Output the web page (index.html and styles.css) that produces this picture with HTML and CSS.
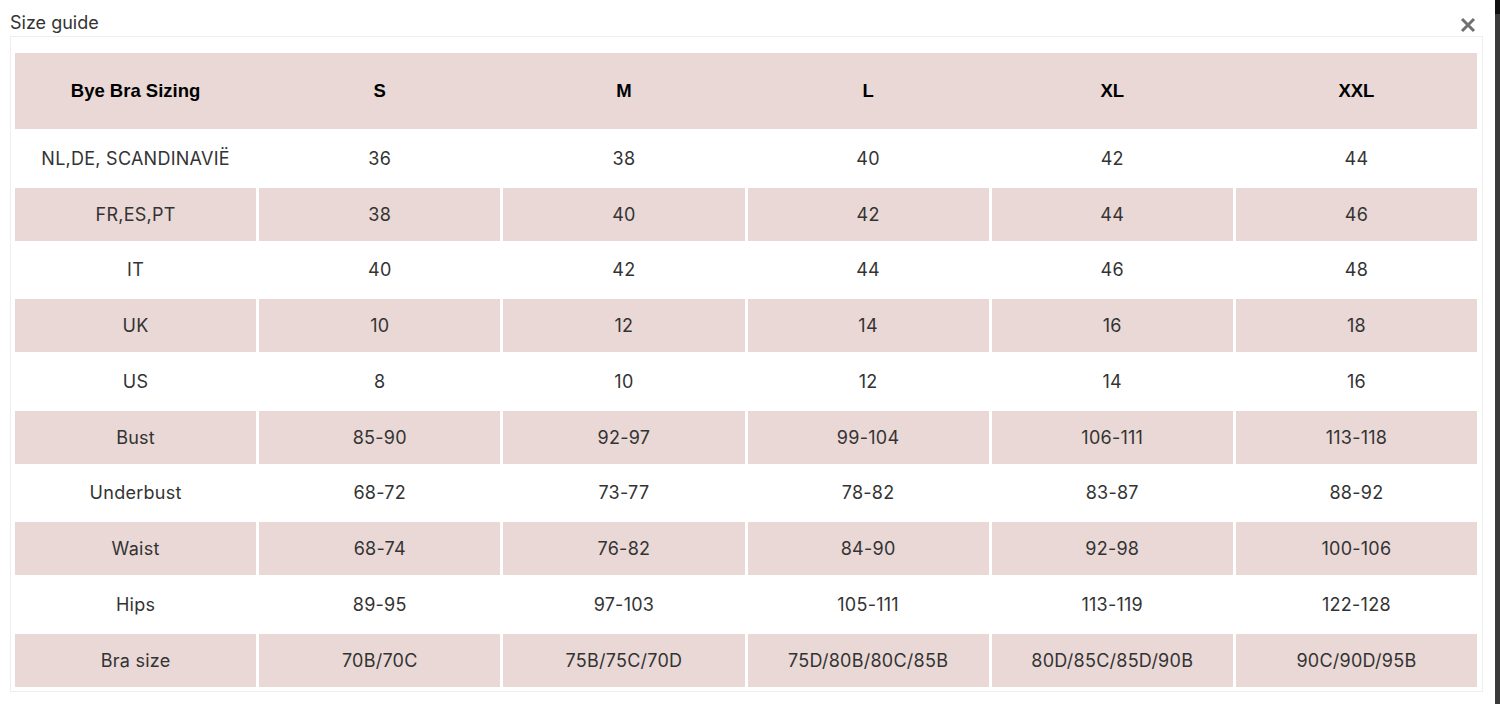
FILE: index.html
```html
<!DOCTYPE html>
<html lang="nl">
<head>
<meta charset="utf-8">
<title>Size guide</title>
<link rel="stylesheet" href="styles.css">
</head>
<body>
<div class="window">
  <main class="page">
    <header class="titlebar">
      <h1 class="title">Size guide</h1>
      <button class="close" aria-label="Close">
        <svg width="16" height="16" viewBox="0 0 16 16"><path d="M2 2 L14 14 M14 2 L2 14" stroke="#707070" stroke-width="3" stroke-linecap="butt"/></svg>
      </button>
    </header>
    <section class="box">
      <div class="table">
        <div class="row head">
          <div class="cell">Bye Bra Sizing</div><div class="cell">S</div><div class="cell">M</div><div class="cell">L</div><div class="cell">XL</div><div class="cell">XXL</div>
        </div>
        <div class="row plain">
          <div class="cell">NL,DE, SCANDINAVIË</div><div class="cell">36</div><div class="cell">38</div><div class="cell">40</div><div class="cell">42</div><div class="cell">44</div>
        </div>
        <div class="row pink">
          <div class="cell">FR,ES,PT</div><div class="cell">38</div><div class="cell">40</div><div class="cell">42</div><div class="cell">44</div><div class="cell">46</div>
        </div>
        <div class="row plain">
          <div class="cell">IT</div><div class="cell">40</div><div class="cell">42</div><div class="cell">44</div><div class="cell">46</div><div class="cell">48</div>
        </div>
        <div class="row pink">
          <div class="cell">UK</div><div class="cell">10</div><div class="cell">12</div><div class="cell">14</div><div class="cell">16</div><div class="cell">18</div>
        </div>
        <div class="row plain">
          <div class="cell">US</div><div class="cell">8</div><div class="cell">10</div><div class="cell">12</div><div class="cell">14</div><div class="cell">16</div>
        </div>
        <div class="row pink">
          <div class="cell">Bust</div><div class="cell">85-90</div><div class="cell">92-97</div><div class="cell">99-104</div><div class="cell">106-111</div><div class="cell">113-118</div>
        </div>
        <div class="row plain">
          <div class="cell">Underbust</div><div class="cell">68-72</div><div class="cell">73-77</div><div class="cell">78-82</div><div class="cell">83-87</div><div class="cell">88-92</div>
        </div>
        <div class="row pink">
          <div class="cell">Waist</div><div class="cell">68-74</div><div class="cell">76-82</div><div class="cell">84-90</div><div class="cell">92-98</div><div class="cell">100-106</div>
        </div>
        <div class="row plain">
          <div class="cell">Hips</div><div class="cell">89-95</div><div class="cell">97-103</div><div class="cell">105-111</div><div class="cell">113-119</div><div class="cell">122-128</div>
        </div>
        <div class="row pink">
          <div class="cell">Bra size</div><div class="cell">70B/70C</div><div class="cell">75B/75C/70D</div><div class="cell">75D/80B/80C/85B</div><div class="cell">80D/85C/85D/90B</div><div class="cell">90C/90D/95B</div>
        </div>
      </div>
    </section>
  </main>
  <div class="scrollbar"></div>
</div>
</body>
</html>
```
FILE: styles.css
```css
* { box-sizing: border-box; }
html, body { margin: 0; padding: 0; height: 100%; background: #fff; }
body { font-family: Inter, "Liberation Sans", Arial, sans-serif; color: #333; }

.window { display: flex; height: 704px; overflow: hidden; }
.page { flex: 1; display: flex; flex-direction: column; }
.scrollbar { width: 5px; background: linear-gradient(#111 0, #111 14px, #3a3a3a 14px); }

.titlebar {
  height: 36px;
  display: flex;
  justify-content: space-between;
  align-items: flex-start;
  padding: 0 19px 0 10px;
}
.title {
  margin: 12px 0 0;
  font-size: 18px;
  line-height: 22px;
  font-weight: 400;
  color: #333;
}
.close {
  margin-top: 17px;
  padding: 0;
  border: 0;
  background: none;
  width: 16px;
  height: 16px;
  display: block;
}
.close svg { display: block; }

.box {
  margin-left: 10px;
  width: 1473px;
  height: 656px;
  border: 1px solid #eeeeee;
  padding: 16px 5px 5px 4px;
}
.table { display: flex; flex-direction: column; gap: 2.75px; width: 1462px; }
.row {
  display: grid;
  grid-template-columns: repeat(6, 1fr);
  column-gap: 3px;
  height: 53px;
}
.cell {
  display: flex;
  align-items: center;
  justify-content: center;
  font-size: 18px;
  letter-spacing: 0.25px;
  padding-top: 0;
  color: #333;
}
.row.pink .cell { background: #e9d8d6; }
.row.head { height: 76px; background: #e9d8d6; }
.row.head .cell {
  font-family: "Liberation Sans", Arial, sans-serif;
  font-weight: 700;
  font-size: 18.5px;
  letter-spacing: 0;
  padding-top: 0;
  color: #000;
}
```
